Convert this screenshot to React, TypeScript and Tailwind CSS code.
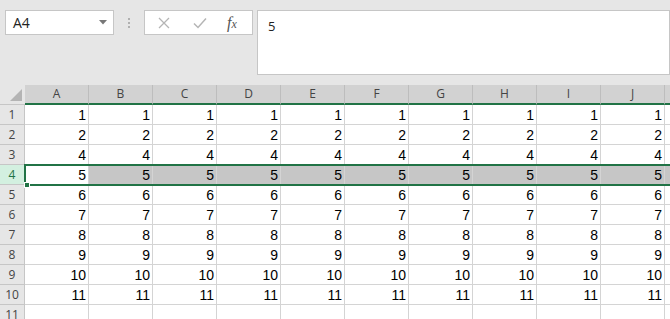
import React from "react";

const cols = ["A", "B", "C", "D", "E", "F", "G", "H", "I", "J", ""];
const values: (number | null)[] = [1, 2, 4, 5, 6, 7, 8, 9, 10, 11, null];

export default function App() {
  return (
    <div
      className="w-[670px] h-[319px] overflow-hidden bg-[#e6e6e6] relative"
      style={{ fontFamily: '"Liberation Sans", Arial, sans-serif' }}
    >
      {/* Top bar */}
      <div className="h-[85px] flex items-start pt-[10px]">
        <div className="ml-[5px] w-[109px] h-[25px] bg-white border border-[#c6c6c6] flex items-center justify-between pl-[7px] pr-[6px]">
          <span className="text-[14px] text-[#222]" style={{ fontFamily: '"Open Sans", sans-serif' }}>A4</span>
          <svg width="8" height="5" viewBox="0 0 8 5">
            <path d="M0 0 L8 0 L4 4.5 Z" fill="#777" />
          </svg>
        </div>
        <div className="w-[30px] h-[25px] flex flex-col items-center justify-center gap-[2px]">
          <div className="w-[2px] h-[2px] bg-[#b0b0b0]" />
          <div className="w-[2px] h-[2px] bg-[#b0b0b0]" />
          <div className="w-[2px] h-[2px] bg-[#b0b0b0]" />
        </div>
        <div className="w-[109px] h-[25px] bg-white border border-[#c6c6c6] flex items-center">
          <div className="w-[38px] flex justify-center">
            <svg width="12" height="12" viewBox="0 0 12 12">
              <path d="M1 1 L11 11 M11 1 L1 11" stroke="#b5b5b5" strokeWidth="1.3" />
            </svg>
          </div>
          <div className="w-[34px] flex justify-center">
            <svg width="14" height="12" viewBox="0 0 14 12">
              <path d="M1 6.5 L5 10.5 L13 1.5" stroke="#b5b5b5" strokeWidth="1.5" fill="none" />
            </svg>
          </div>
          <div className="w-[30px] flex justify-center">
            <span className="text-[16px] italic text-[#555] leading-none" style={{ fontFamily: '"Liberation Serif", serif' }}>
              f<span className="text-[12px]">x</span>
            </span>
          </div>
        </div>
        <div className="ml-[4px] flex-1 h-[65px] bg-white border border-[#c6c6c6] pl-[10px] pt-[3px]">
          <span className="text-[13px] text-[#222]" style={{ fontFamily: '"Open Sans", sans-serif' }}>5</span>
        </div>
      </div>

      {/* Grid */}
      <div className="relative">
        {/* header row */}
        <div className="flex h-[20px]">
          <div className="w-[25px] shrink-0 h-[20px] bg-[#e6e6e6] border-b border-[#c6c6c6] relative">
            <svg className="absolute right-[3px] bottom-[3px]" width="12" height="12" viewBox="0 0 12 12">
              <path d="M12 0 L12 12 L0 12 Z" fill="#b4b4b4" />
            </svg>
          </div>
          {cols.map((c, i) => (
            <div
              key={i}
              className="w-[64px] shrink-0 h-[20px] bg-[#d2d2d2] border-r border-[#bdbdbd] border-b-2 border-b-[#217346] flex items-center justify-center text-[12px] text-[#444]"
              style={{ fontFamily: '"Open Sans", sans-serif' }}
            >
              {c}
            </div>
          ))}
        </div>
        {values.map((v, r) => {
          const sel = r === 3;
          return (
            <div key={r} className="flex h-[20px]">
              <div
                className={
                  sel
                    ? "w-[25px] shrink-0 h-[20px] bg-[#d3f0e0] border-b border-r border-[#c6c6c6] text-[#217346] text-[12px] flex items-center justify-center"
                    : "w-[25px] shrink-0 h-[20px] bg-[#e6e6e6] border-b border-r border-[#c6c6c6] text-[#444] text-[12px] flex items-center justify-center"
                }
                style={{ fontFamily: '"Open Sans", sans-serif' }}
              >
                {r + 1}
              </div>
              {cols.map((_, c) => (
                <div
                  key={c}
                  className={
                    sel && c > 0
                      ? "w-[64px] shrink-0 h-[20px] bg-[#c6c6c6] border-r border-b border-[#d4d4d4] text-right pr-[2px] text-[14px] leading-[20px] text-black"
                      : "w-[64px] shrink-0 h-[20px] bg-white border-r border-b border-[#d4d4d4] text-right pr-[2px] text-[14px] leading-[20px] text-black"
                  }
                >
                  {v !== null && c < 10 ? v : ""}
                </div>
              ))}
            </div>
          );
        })}
        {/* selection overlay */}
        <div className="absolute left-[24px] top-[79px] w-[660px] h-[22px] border-2 border-[#217346] pointer-events-none" />
        <div className="absolute left-[24px] top-[97px] w-[6px] h-[6px] bg-[#217346] border border-white" />
      </div>
    </div>
  );
}
